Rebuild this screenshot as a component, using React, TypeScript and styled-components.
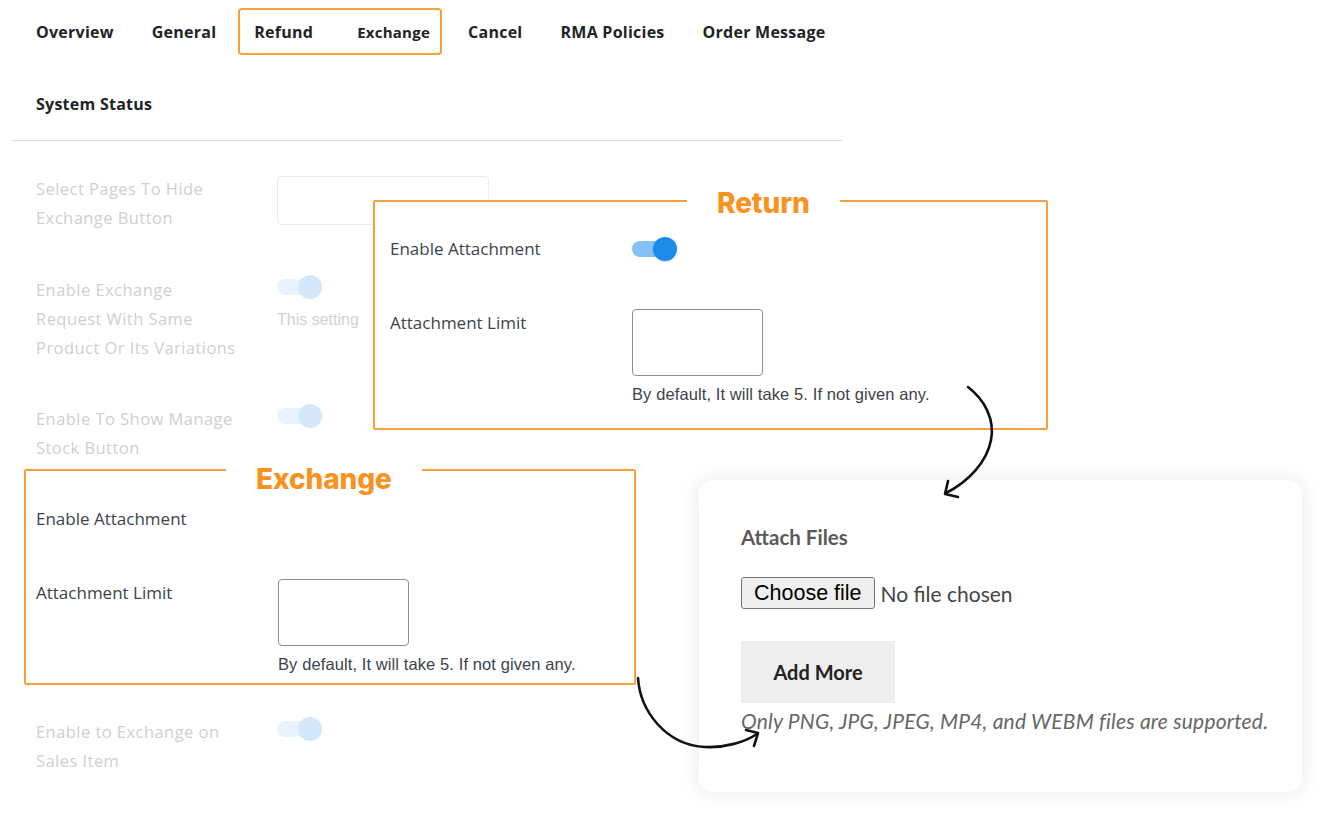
import * as React from 'react';
import styled, { createGlobalStyle } from 'styled-components';

//-----------------------------------------------------------------------------//
// Styles
//-----------------------------------------------------------------------------//

const GlobalStyle = createGlobalStyle`
  html, body {
    margin:     0;
    padding:    0;
    background: #ffffff;
  }
  * { box-sizing: border-box; }
`;

const Canvas = styled.div`
  position:   relative;
  width:      1331px;
  height:     822px;
  overflow:   hidden;
  background: #ffffff;
  font-family: "Open Sans", "Liberation Sans", sans-serif;
`;

const Main = styled.div`
  margin-left: 12px;
  width:       830px;
`;

const Nav = styled.nav`
  display:       flex;
  flex-wrap:     wrap;
  column-gap:    38px;
  row-gap:       25px;
  padding:       8px 0 13px 24px;
  border-bottom: 1px solid #dcdcde;
`;

const Tab = styled.div<{ $small?: boolean }>`
  display:        flex;
  align-items:    center;
  height:         47px;
  font-family:    "Open Sans", sans-serif;
  font-weight:    700;
  font-size:      ${p => (p.$small ? '15px' : '16px')};
  letter-spacing: 0.25px;
  color:          #1d2327;
  white-space:    nowrap;
`;

const TabGroup = styled.div`
  display:       flex;
  align-items:   center;
  gap:           44px;
  height:        47px;
  margin:        0 -12px 0 -16px;
  padding:       0 10px 0 14px;
  border:        2px solid #f5a336;
  border-radius: 4px;

  ${Tab} { height: 100%; }
`;

const Rows = styled.div<{ $top: number }>`
  padding: ${p => p.$top}px 0 0 24px;
`;

const Row = styled.div<{ $gap: number }>`
  display:               grid;
  grid-template-columns: 241px 1fr;
  margin-top:            ${p => p.$gap}px;
`;

const FadedLabel = styled.div`
  font-size:      16.5px;
  letter-spacing: 0.45px;
  line-height:    29px;
  color:          #cfcfcf;
`;

const FadedInput = styled.div`
  width:         212px;
  height:        49px;
  margin-top:    2px;
  border:        1px solid #ececec;
  border-radius: 4px;
`;

const FadedNote = styled.div`
  margin-top:  6px;
  font-family: "Liberation Sans", Arial, sans-serif;
  font-size:   16px;
  line-height: 29px;
  color:       #d2d2d2;
  white-space: nowrap;
`;

const Toggle = styled.div<{ $faded?: boolean }>`
  position: relative;
  width:    45px;
  height:   24px;

  &::before {
    content:       '';
    position:      absolute;
    left:          0;
    top:           4px;
    width:         38px;
    height:        16px;
    border-radius: 8px;
    background:    ${p => (p.$faded ? '#e9f3fd' : '#86c1f3')};
  }

  &::after {
    content:       '';
    position:      absolute;
    right:         0;
    top:           0;
    width:         24px;
    height:        24px;
    border-radius: 50%;
    background:    ${p => (p.$faded ? '#d5e8fb' : '#1b8de9')};
    box-shadow:    ${p => (p.$faded ? 'none' : '0 1px 2px rgba(0,0,0,0.15)')};
  }
`;

const Panel = styled.div<{ $pad: string }>`
  position:      relative;
  background:    #ffffff;
  border:        2px solid #f6a23a;
  border-radius: 2px;
  padding:       ${p => p.$pad};
`;

const ReturnPanel = styled(Panel)`
  position: absolute;
  left:     373px;
  top:      200px;
  width:    675px;
  z-index:  2;
`;

const ExchangePanel = styled(Panel)`
  width:   612px;
  margin:  7px 0 0 12px;
  z-index: 2;
`;

const PanelTitle = styled.div<{ $left: number; $top: number }>`
  position:       absolute;
  left:           ${p => p.$left}px;
  top:            ${p => p.$top}px;
  padding:        0 30px;
  background:     #ffffff;
  font-family:    Inter, "Open Sans", sans-serif;
  font-weight:    800;
  font-size:      28px;
  line-height:    34px;
  letter-spacing: -0.1px;
  color:          #f7931e;
`;

const PanelGrid = styled.div`
  display:               grid;
  grid-template-columns: 242px 1fr;
  row-gap:               48px;
`;

const PanelLabel = styled.div<{ $shift?: number }>`
  padding-top: ${p => p.$shift ?? 0}px;
  font-size:   17px;
  line-height: 24px;
  color:       #3c434a;
`;

const LimitInput = styled.div`
  width:         131px;
  height:        67px;
  border:        1px solid #8c8f94;
  border-radius: 4px;
`;

const HelpText = styled.div`
  margin-top:     8px;
  font-family:    "Liberation Sans", Arial, sans-serif;
  font-size:      16.5px;
  letter-spacing: 0.1px;
  line-height:    20px;
  color:          #3c434a;
`;

const Card = styled.div`
  position:      absolute;
  left:          699px;
  top:           480px;
  width:         603px;
  height:        312px;
  padding:       44px 42px 0 42px;
  border-radius: 14px;
  background:    #ffffff;
  box-shadow:    0 0 22px rgba(0, 0, 0, 0.09);
  font-family:   Lato, "Open Sans", sans-serif;
  z-index:       3;
`;

const CardTitle = styled.div`
  font-size:   20.5px;
  font-weight: 700;
  line-height: 26px;
  color:       #5a5a5a;
`;

const FileRow = styled.div`
  display:     flex;
  align-items: center;
  gap:         6px;
  margin-top:  27px;
`;

const ChooseButton = styled.button`
  height:        32px;
  padding:       0 12px;
  border:        1px solid #767676;
  border-radius: 3px;
  background:    #efefef;
  font-family:   "Liberation Sans", Arial, sans-serif;
  font-size:     21.5px;
  color:         #000000;
`;

const NoFile = styled.span`
  font-size: 21px;
  color:     #444444;
`;

const AddMore = styled.button`
  display:     block;
  width:       154px;
  height:      62px;
  margin-top:  32px;
  border:      none;
  background:  #eeeeee;
  font-family: Lato, "Open Sans", sans-serif;
  font-weight: 700;
  font-size:   20px;
  color:       #222222;
`;

const Supported = styled.div`
  margin-top:     5px;
  font-size:      21px;
  font-style:     italic;
  letter-spacing: 0.2px;
  line-height:    26px;
  color:          #666666;
  white-space:    nowrap;
`;

const Arrows = styled.svg`
  position:       absolute;
  left:           0;
  top:            0;
  z-index:        4;
  pointer-events: none;
`;

//-----------------------------------------------------------------------------//
// Parts
//-----------------------------------------------------------------------------//

const tabs      = ['Overview', 'General'];
const tabsAfter = ['Cancel', 'RMA Policies', 'Order Message', 'System Status'];

const AttachmentFields = ({ toggle }: { toggle: boolean }) => (
  <PanelGrid>
    <PanelLabel>Enable Attachment</PanelLabel>
    <div>{toggle && <Toggle />}</div>
    <PanelLabel $shift={2}>Attachment Limit</PanelLabel>
    <div>
      <LimitInput />
      <HelpText>By default, It will take 5. If not given any.</HelpText>
    </div>
  </PanelGrid>
);

//-----------------------------------------------------------------------------//
// App
//-----------------------------------------------------------------------------//

export default function App() {
  return (
    <Canvas>
      <GlobalStyle />
      <Main>
        <Nav>
          {tabs.map(t => <Tab key={t}>{t}</Tab>)}
          <TabGroup>
            <Tab>Refund</Tab>
            <Tab $small>Exchange</Tab>
          </TabGroup>
          {tabsAfter.map(t => <Tab key={t}>{t}</Tab>)}
        </Nav>

        <Rows $top={33}>
          <Row $gap={0}>
            <FadedLabel>Select Pages To Hide<br />Exchange Button</FadedLabel>
            <FadedInput />
          </Row>
          <Row $gap={43}>
            <FadedLabel>Enable Exchange<br />Request With Same<br />Product Or Its Variations</FadedLabel>
            <div>
              <Toggle $faded />
              <FadedNote>This setting</FadedNote>
            </div>
          </Row>
          <Row $gap={42}>
            <FadedLabel>Enable To Show Manage<br />Stock Button</FadedLabel>
            <Toggle $faded />
          </Row>
        </Rows>

        <ExchangePanel $pad="36px 12px 9px 10px">
          <PanelTitle $left={200} $top={-9}>Exchange</PanelTitle>
          <AttachmentFields toggle={false} />
        </ExchangePanel>

        <Rows $top={32}>
          <Row $gap={0}>
            <FadedLabel>Enable to Exchange on<br />Sales Item</FadedLabel>
            <Toggle $faded />
          </Row>
        </Rows>
      </Main>

      <ReturnPanel $pad="35px 17px 24px 15px">
        <PanelTitle $left={312} $top={-16}>Return</PanelTitle>
        <AttachmentFields toggle />
      </ReturnPanel>

      <Card>
        <CardTitle>Attach Files</CardTitle>
        <FileRow>
          <ChooseButton>Choose file</ChooseButton>
          <NoFile>No file chosen</NoFile>
        </FileRow>
        <AddMore>Add More</AddMore>
        <Supported>Only PNG, JPG, JPEG, MP4, and WEBM files are supported.</Supported>
      </Card>

      <Arrows width="1331" height="822" viewBox="0 0 1331 822" fill="none"
        stroke="#111" strokeWidth="2.6" strokeLinecap="round" strokeLinejoin="round">
        <path d="M968 387 C 985 400, 995 420, 991 440 C 987 462, 968 482, 946 493" />
        <path d="M948 481 L945 494 L958 497" />
        <path d="M638 678 C 640 710, 665 745, 705 747 C 725 748, 745 742, 757 734" />
        <path d="M746 730 L758 733 L754 746" />
      </Arrows>
    </Canvas>
  );
}
